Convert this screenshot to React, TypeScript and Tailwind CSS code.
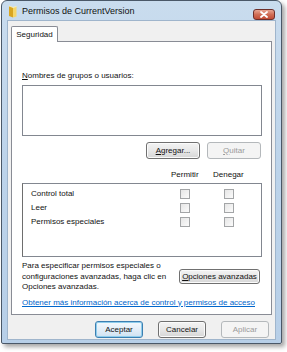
import React from "react"

const font = { fontFamily: '"Liberation Sans", Arial, sans-serif' }

function Btn({ children, disabled, primary, className }: { children: React.ReactNode; disabled?: boolean; primary?: boolean; className?: string }) {
  const base = "flex items-center justify-center rounded-[3px] border text-[8px] leading-none"
  const look = disabled
    ? "border-[#b4b8bb] bg-[#f4f4f4] text-[#9a9a9a]"
    : primary
      ? "border-[#3c7fb1] bg-gradient-to-b from-[#f4f9fd] via-[#e3eef8] to-[#cfe2f2] text-[#111] shadow-[inset_0_0_0_1px_#8fcdec]"
      : "border-[#707070] bg-gradient-to-b from-[#f3f3f3] via-[#e8e8e8] to-[#d6d6d6] text-[#111] shadow-[inset_0_0_0_1px_#fbfbfb]"
  return <div className={`${base} ${look} ${className ?? ""}`}>{children}</div>
}

function Check() {
  return <div className="h-[10px] w-[10px] border border-[#a3a5a7] bg-gradient-to-br from-[#e6e6e6] to-[#fbfbfb]" />
}

function FolderIcon() {
  return (
    <svg width="9" height="13" viewBox="0 0 9 13">
      <path d="M1 1 L5 2.5 L5 12.5 L1 11 Z" fill="#d9a520" />
      <path d="M5 2.5 L8.5 1.5 L8.5 11.5 L5 12.5 Z" fill="#f5d66a" />
      <path d="M1 1 L5 2.5 L8.5 1.5" fill="none" stroke="#fff3b8" strokeWidth="0.8" />
    </svg>
  )
}

const rows = ["Control total", "Leer", "Permisos especiales"]

export default function App() {
  return (
    <div className="h-[352px] w-[287px] bg-white pl-px" style={font}>
      <div className="flex h-[344px] w-[281px] flex-col rounded-t-[6px] rounded-b-[2px] border border-[#4a5868] bg-gradient-to-b from-[#c9dcee] via-[#bcd3ea] to-[#b7cfe8] px-[5px] pb-[3px] shadow-[3px_3px_4px_rgba(0,0,0,0.35)]">
        <div className="flex h-[19px] shrink-0 items-center">
          <div className="ml-[1px] mt-[2px]">
            <FolderIcon />
          </div>
          <span className="ml-[5px] mt-[2px] text-[9px] text-[#111]">Permisos de CurrentVersion</span>
          <div className="ml-auto mr-[1px] mt-[7px] flex h-[11px] w-[22px] items-center justify-center rounded-[3px] border border-[#6d2f2a] bg-gradient-to-b from-[#e8a592] via-[#d06d55] to-[#c24b35]">
            <svg width="8" height="7" viewBox="0 0 8 7">
              <path d="M1 1 L7 6 M7 1 L1 6" stroke="#fff" strokeWidth="1.8" strokeLinecap="round" />
            </svg>
          </div>
        </div>

        <div className="flex flex-1 flex-col border border-[#9fb5cc] bg-[#f0f0f0] pl-[3px] pr-[6px] pt-[5px]">
          <div className="flex">
            <div className="z-10 -mb-px flex h-[16px] w-[47px] items-center justify-center rounded-t-[2px] border border-b-0 border-[#898c95] bg-white text-[8px] text-[#111]">
              Seguridad
            </div>
          </div>
          <div className="flex h-[274px] w-[261px] flex-col border border-[#898c95] bg-white px-[10px] pt-[29px]">
            <div className="text-[8px] leading-[10px] text-[#111]">
              <span className="underline">N</span>ombres de grupos o usuarios:
            </div>
            <div className="mt-[4px] h-[51px] w-[240px] border border-[#828790] bg-white" />
            <div className="mt-[6px] flex w-[239px] justify-end gap-[7px]">
              <Btn className="h-[17px] w-[54px]">
                <span><span className="underline">A</span>gregar...</span>
              </Btn>
              <Btn disabled className="h-[17px] w-[54px]">
                <span><span className="underline">Q</span>uitar</span>
              </Btn>
            </div>
            <div className="mt-[9px] flex h-[13px] items-center text-[8px] text-[#111]">
              <span className="ml-[149px] w-[42px]">Permitir</span>
              <span>Denegar</span>
            </div>
            <div className="mt-[2px] flex h-[74px] w-[240px] flex-col gap-[4px] border border-[#828790] border-l-[#6e6e6e] bg-white pl-[8px] pt-[5px]">
              {rows.map((r) => (
                <div key={r} className="flex h-[10px] items-center text-[8px] text-[#111]">
                  <span className="w-[149px]">{r}</span>
                  <Check />
                  <div className="ml-[34px]">
                    <Check />
                  </div>
                </div>
              ))}
            </div>
            <div className="mt-[4px] flex items-center">
              <div className="w-[150px] text-[8px] leading-[10.5px] text-[#111]">
                Para especificar permisos especiales o configuraciones avanzadas, haga clic en Opciones avanzadas.
              </div>
              <Btn className="ml-auto mr-[1px] h-[15px] w-[81px]">
                <span><span className="underline">O</span>pciones avanzadas</span>
              </Btn>
            </div>
            <div className="mt-[5px] text-[8px] leading-[10px] text-[#0066cc] underline">
              Obtener más información acerca de control y permisos de acceso
            </div>
          </div>
          <div className="mt-[6px] flex justify-end gap-[15px]">
            <Btn primary className="h-[17px] w-[48px]">Aceptar</Btn>
            <Btn className="h-[17px] w-[48px]">Cancelar</Btn>
            <Btn disabled className="h-[17px] w-[48px]">Aplicar</Btn>
          </div>
        </div>
      </div>
    </div>
  )
}
